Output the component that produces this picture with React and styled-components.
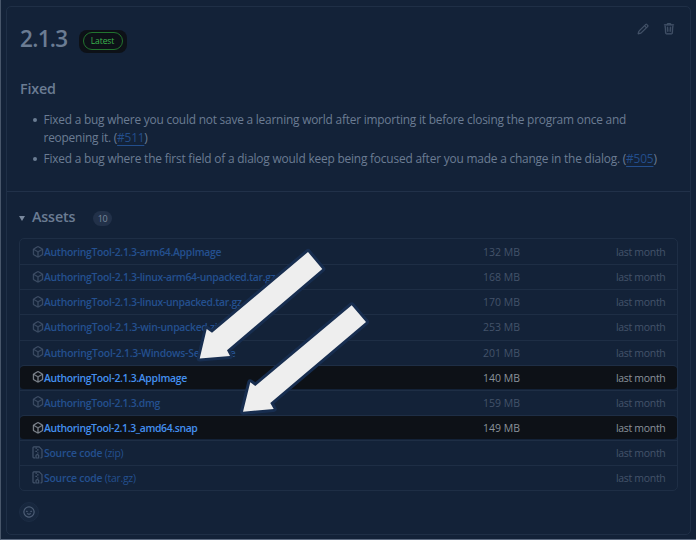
import React from "react";
import styled, { createGlobalStyle } from "styled-components";
import { GoPencil, GoTrash, GoPackage, GoSmiley } from "react-icons/go";

const GlobalStyle = createGlobalStyle`
  * { box-sizing: border-box; }
  body { margin: 0; background: #132238; font-family: "Open Sans", "Noto Sans", sans-serif; }
`;

const Page = styled.div`
  position: relative;
  width: 696px;
  height: 540px;
  padding: 6px 5px 5px 5px;
  background: #132238;
  border-left: 1px solid #48566a;
  border-bottom: 1px solid #5d6b81;
  overflow: hidden;
`;

const Card = styled.section`
  width: 685px;
  height: 529px;
  border: 1px solid #1f2f46;
  border-radius: 5px;
`;

const Notes = styled.div`
  height: 185px;
  padding: 12px 13px 0 13px;
  border-bottom: 1px solid #213149;
  color: #6b7c93;
`;

const TitleRow = styled.header`
  display: flex;
  align-items: center;
  height: 42px;
`;

const Title = styled.h1`
  margin: 0;
  width: 59px;
  font-size: 22.5px;
  line-height: 32px;
  font-weight: 600;
  letter-spacing: -0.7px;
  padding-bottom: 3px;
`;

const BadgeBackdrop = styled.div`
  display: flex;
  align-items: center;
  justify-content: center;
  width: 48px;
  height: 23px;
  margin-top: 2px;
  border-radius: 8px;
  background: #0d1117;
`;

const Badge = styled.span`
  width: 40px;
  height: 18px;
  border: 1px solid #22742f;
  border-radius: 9px;
  color: #3cb44d;
  font-size: 8.5px;
  line-height: 16px;
  font-weight: 500;
  letter-spacing: -0.1px;
  padding-right: 1px;
  text-align: center;
`;

const Actions = styled.div`
  display: flex;
  gap: 14px;
  margin: -22px 2px 0 auto;
  color: #4a596f;

  svg {
    stroke: #4a596f;
    stroke-width: 0.8px;
  }
`;

const Subtitle = styled.h2`
  margin: 17px 0 0;
  padding-top: 1px;
  font-size: 14.3px;
  line-height: 20px;
  font-weight: 600;
  letter-spacing: -0.2px;
`;

const FixList = styled.ul`
  margin: 11px 0 0;
  padding: 0 0 0 13px;
  list-style: none;
  font-size: 11.9px;
  line-height: 18px;
`;

const FixItem = styled.li`
  display: flex;
  margin-bottom: 3px;

  &::before {
    content: "";
    flex: none;
    width: 4px;
    height: 4px;
    margin: 8px 6.5px 0 0;
    border-radius: 50%;
    background: #6b7c93;
  }
`;

const Line = styled.span`
  display: block;
  white-space: nowrap;
  letter-spacing: ${(p) => p.$track}px;
`;

const Issue = styled.a`
  color: #234e8c;
  text-decoration: underline;
  text-underline-offset: 3px;
`;

const Assets = styled.div`
  padding: 14px 12px 0 12px;
`;

const AssetsHeader = styled.div`
  display: flex;
  align-items: center;
  height: 22px;
  color: #6b7c93;
`;

const Caret = styled.span`
  width: 0;
  height: 0;
  margin: 3px 7px 0 0;
  border: 3px solid transparent;
  border-top: 5px solid #7a899e;
  border-bottom: 0;
`;

const AssetsTitle = styled.h3`
  margin: 0;
  width: 61px;
  font-size: 14.3px;
  line-height: 20px;
  font-weight: 600;
  letter-spacing: -0.15px;
`;

const Count = styled.span`
  width: 19px;
  height: 15px;
  margin-top: 3px;
  border-radius: 8px;
  background: #223149;
  color: #7a899e;
  font-size: 9px;
  line-height: 15px;
  letter-spacing: -0.5px;
  text-align: center;
`;

const Table = styled.div`
  width: 659px;
  height: 253px;
  margin-top: 10px;
  border: 1px solid #1e2e45;
  border-radius: 5px;
`;

const Row = styled.div`
  display: grid;
  grid-template-columns: 12px 12px 405px 71px 1fr;
  align-items: center;
  height: 25.15px;
  padding-top: ${(p) => (p.$lit ? "1px" : "0")};
  border-top: 1px solid ${(p) => (p.$first ? "transparent" : "#1e2e45")};
  border-bottom: ${(p) => (p.$lit ? "1px solid transparent" : "0")};
  color: ${(p) => (p.$lit ? "#8a929b" : "#43536a")};
  background: ${(p) => (p.$lit ? "#0d1117" : "transparent")};
  background-clip: padding-box;
  border-radius: ${(p) => (p.$lit ? "4px" : "0")};
  font-size: 10.5px;
`;

const IconCell = styled.span`
  grid-column: 2;
  display: flex;
  padding-bottom: 1px;

  svg {
    flex: none;
    stroke: currentColor;
    stroke-width: 0.7px;
  }
`;

const Name = styled.a`
  color: ${(p) => (p.$lit ? "#4490f0" : "#24508f")};
  font-size: 10.4px;
  font-weight: 600;
  white-space: nowrap;
  letter-spacing: ${(p) => p.$track}px;
`;

const Suffix = styled.span`
  font-weight: 400;
`;

const Size = styled.span`
  text-align: right;
`;

const When = styled.span`
  text-align: right;
  padding-right: 11.5px;
  letter-spacing: -0.3px;
`;

const Reaction = styled.button`
  display: flex;
  align-items: center;
  justify-content: center;
  width: 20px;
  height: 20px;
  margin: 11px 0 0;
  padding: 0;
  border: 1px solid #1c2c44;
  border-radius: 50%;
  background: #17273e;
  color: #56667e;

  svg {
    flex: none;
    stroke: currentColor;
    stroke-width: 0.5px;
  }
`;

const Arrows = styled.svg`
  position: absolute;
  left: -1px;
  top: 0;
  pointer-events: none;
`;

function ZipIcon() {
  return (
    <svg width="11" height="13" viewBox="0 0 11 13" fill="none">
      <path d="M3 11.9H1.8Q1 11.9 1 11.1V1.7Q1 .9 1.8 .9H7.2L10 3.7V11.1Q10 11.9 9.2 11.9H8.5" />
      <path d="M3.4 2.2H5M5 3.8H6.6M3.4 5.4H5M5 7H6.6" />
      <path d="M4 12V9.6Q4 8.7 5.3 8.7Q6.7 8.7 6.7 9.6V12Z" />
    </svg>
  );
}

const ZipCell = styled(IconCell)`
  svg {
    stroke-width: 1.2px;
  }
`;

const assets = [
  { name: "AuthoringTool-2.1.3-arm64.AppImage", size: "132 MB", track: -0.31 },
  { name: "AuthoringTool-2.1.3-linux-arm64-unpacked.tar.gz", size: "168 MB", track: -0.31 },
  { name: "AuthoringTool-2.1.3-linux-unpacked.tar.gz", size: "170 MB", track: -0.31 },
  { name: "AuthoringTool-2.1.3-win-unpacked.zip", size: "253 MB", track: -0.28 },
  { name: "AuthoringTool-2.1.3-Windows-Setup.exe", size: "201 MB", track: -0.24 },
  { name: "AuthoringTool-2.1.3.AppImage", size: "140 MB", track: -0.33, lit: true },
  { name: "AuthoringTool-2.1.3.dmg", size: "159 MB", track: -0.33 },
  { name: "AuthoringTool-2.1.3_amd64.snap", size: "149 MB", track: -0.36, lit: true },
  { name: "Source code", suffix: "(zip)", track: -0.25 },
  { name: "Source code", suffix: "(tar.gz)", track: -0.25 },
];

export default function App() {
  return (
    <Page>
      <GlobalStyle />
      <Card>
        <Notes>
          <TitleRow>
            <Title>2.1.3</Title>
            <BadgeBackdrop>
              <Badge>Latest</Badge>
            </BadgeBackdrop>
            <Actions>
              <GoPencil size={12} />
              <GoTrash size={12} />
            </Actions>
          </TitleRow>
          <Subtitle>Fixed</Subtitle>
          <FixList>
            <FixItem>
              <div>
                <Line $track={-0.21}>
                  Fixed a bug where you could not save a learning world after importing it before closing the program once and
                </Line>
                <Line $track={-0.21}>
                  reopening it. (<Issue>#511</Issue>)
                </Line>
              </div>
            </FixItem>
            <FixItem>
              <Line $track={-0.19}>
                Fixed a bug where the first field of a dialog would keep being focused after you made a change in the dialog. (
                <Issue>#505</Issue>)
              </Line>
            </FixItem>
          </FixList>
        </Notes>
        <Assets>
          <AssetsHeader>
            <Caret />
            <AssetsTitle>Assets</AssetsTitle>
            <Count>10</Count>
          </AssetsHeader>
          <Table>
            {assets.map((a, i) => (
              <Row key={i} $first={i === 0} $lit={a.lit}>
                {a.suffix ? (
                  <ZipCell>
                    <ZipIcon />
                  </ZipCell>
                ) : (
                  <IconCell>
                    <GoPackage size={12} />
                  </IconCell>
                )}
                <Name $lit={a.lit} $track={a.track}>
                  {a.name}
                  {a.suffix && <Suffix> {a.suffix}</Suffix>}
                </Name>
                <Size>{a.size}</Size>
                <When>last month</When>
              </Row>
            ))}
          </Table>
          <Reaction aria-label="Add reaction">
            <GoSmiley size={12} />
          </Reaction>
        </Assets>
      </Card>
      <Arrows width="696" height="540" viewBox="0 0 696 540" fill="#eeeeee" stroke="#172d4f" strokeWidth="6" strokeLinejoin="round" paintOrder="stroke">
        <path d="M199.7 358.5L206.7 329L212 332.7L308 252L322.3 269L227 350.3L230 356Z" />
        <path d="M243 411.8L250.3 382.3L255.3 386L351.7 305.3L366 322L270.3 403L273.7 409Z" />
      </Arrows>
    </Page>
  );
}
